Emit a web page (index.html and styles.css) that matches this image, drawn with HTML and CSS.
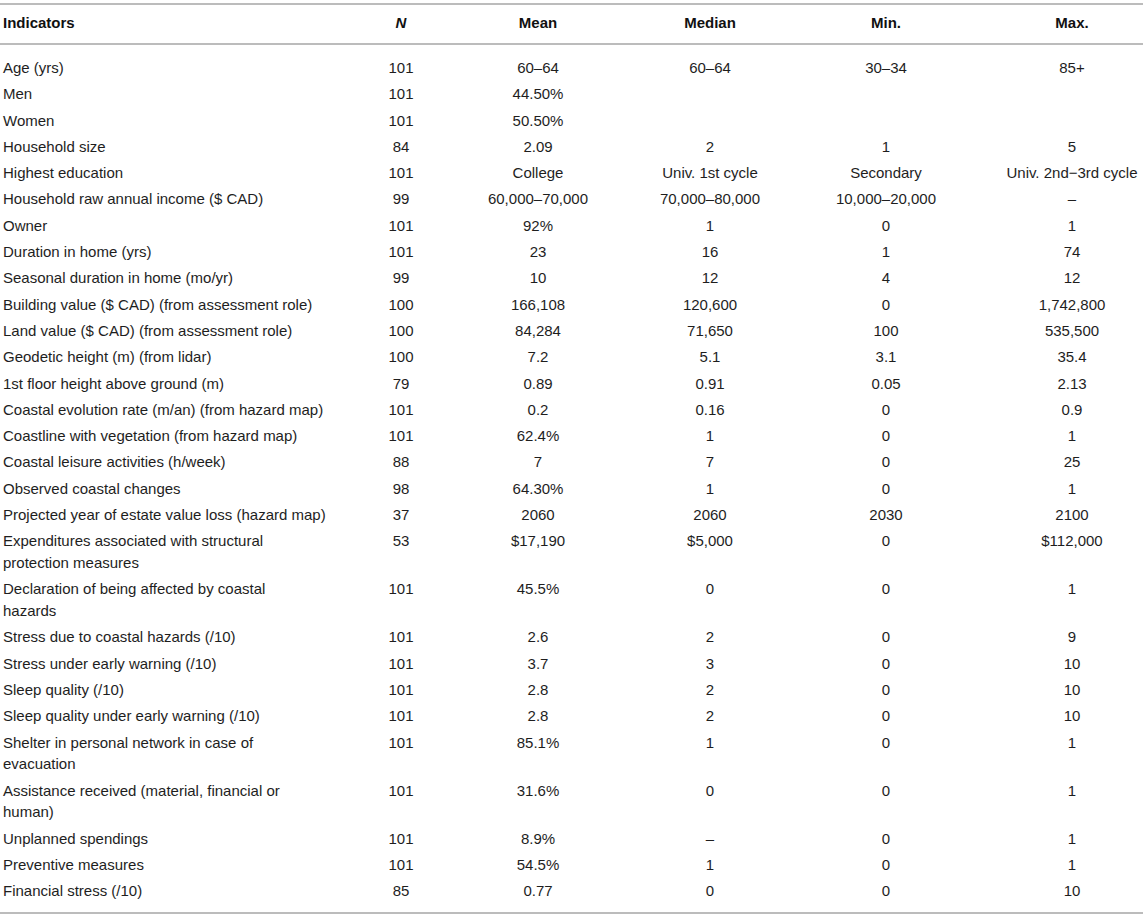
FILE: index.html
```html
<!DOCTYPE html>
<html lang="en">
<head>
<meta charset="utf-8">
<title>Indicators</title>
<link rel="stylesheet" href="styles.css">
</head>
<body>
<table class="data">
  <colgroup>
    <col class="c-ind"><col class="c-n"><col class="c-mean"><col class="c-med"><col class="c-min"><col class="c-max">
  </colgroup>
  <thead>
    <tr><th class="lbl">Indicators</th><th><i>N</i></th><th>Mean</th><th>Median</th><th>Min.</th><th>Max.</th></tr>
  </thead>
  <tbody>
    <tr><td class="lbl">Age (yrs)</td><td>101</td><td>60–64</td><td>60–64</td><td>30–34</td><td>85+</td></tr>
    <tr><td class="lbl">Men</td><td>101</td><td>44.50%</td><td></td><td></td><td></td></tr>
    <tr><td class="lbl">Women</td><td>101</td><td>50.50%</td><td></td><td></td><td></td></tr>
    <tr><td class="lbl">Household size</td><td>84</td><td>2.09</td><td>2</td><td>1</td><td>5</td></tr>
    <tr><td class="lbl">Highest education</td><td>101</td><td>College</td><td>Univ. 1st cycle</td><td>Secondary</td><td>Univ. 2nd−3rd cycle</td></tr>
    <tr><td class="lbl">Household raw annual income ($ CAD)</td><td>99</td><td>60,000–70,000</td><td>70,000–80,000</td><td>10,000–20,000</td><td>–</td></tr>
    <tr><td class="lbl">Owner</td><td>101</td><td>92%</td><td>1</td><td>0</td><td>1</td></tr>
    <tr><td class="lbl">Duration in home (yrs)</td><td>101</td><td>23</td><td>16</td><td>1</td><td>74</td></tr>
    <tr><td class="lbl">Seasonal duration in home (mo/yr)</td><td>99</td><td>10</td><td>12</td><td>4</td><td>12</td></tr>
    <tr><td class="lbl">Building value ($ CAD) (from assessment role)</td><td>100</td><td>166,108</td><td>120,600</td><td>0</td><td>1,742,800</td></tr>
    <tr><td class="lbl">Land value ($ CAD) (from assessment role)</td><td>100</td><td>84,284</td><td>71,650</td><td>100</td><td>535,500</td></tr>
    <tr><td class="lbl">Geodetic height (m) (from lidar)</td><td>100</td><td>7.2</td><td>5.1</td><td>3.1</td><td>35.4</td></tr>
    <tr><td class="lbl">1st floor height above ground (m)</td><td>79</td><td>0.89</td><td>0.91</td><td>0.05</td><td>2.13</td></tr>
    <tr><td class="lbl">Coastal evolution rate (m/an) (from hazard map)</td><td>101</td><td>0.2</td><td>0.16</td><td>0</td><td>0.9</td></tr>
    <tr><td class="lbl">Coastline with vegetation (from hazard map)</td><td>101</td><td>62.4%</td><td>1</td><td>0</td><td>1</td></tr>
    <tr><td class="lbl">Coastal leisure activities (h/week)</td><td>88</td><td>7</td><td>7</td><td>0</td><td>25</td></tr>
    <tr><td class="lbl">Observed coastal changes</td><td>98</td><td>64.30%</td><td>1</td><td>0</td><td>1</td></tr>
    <tr><td class="lbl">Projected year of estate value loss (hazard map)</td><td>37</td><td>2060</td><td>2060</td><td>2030</td><td>2100</td></tr>
    <tr><td class="lbl">Expenditures associated with structural<br>protection measures</td><td>53</td><td>$17,190</td><td>$5,000</td><td>0</td><td>$112,000</td></tr>
    <tr><td class="lbl">Declaration of being affected by coastal<br>hazards</td><td>101</td><td>45.5%</td><td>0</td><td>0</td><td>1</td></tr>
    <tr><td class="lbl">Stress due to coastal hazards (/10)</td><td>101</td><td>2.6</td><td>2</td><td>0</td><td>9</td></tr>
    <tr><td class="lbl">Stress under early warning (/10)</td><td>101</td><td>3.7</td><td>3</td><td>0</td><td>10</td></tr>
    <tr><td class="lbl">Sleep quality (/10)</td><td>101</td><td>2.8</td><td>2</td><td>0</td><td>10</td></tr>
    <tr><td class="lbl">Sleep quality under early warning (/10)</td><td>101</td><td>2.8</td><td>2</td><td>0</td><td>10</td></tr>
    <tr><td class="lbl">Shelter in personal network in case of<br>evacuation</td><td>101</td><td>85.1%</td><td>1</td><td>0</td><td>1</td></tr>
    <tr><td class="lbl">Assistance received (material, financial or<br>human)</td><td>101</td><td>31.6%</td><td>0</td><td>0</td><td>1</td></tr>
    <tr><td class="lbl">Unplanned spendings</td><td>101</td><td>8.9%</td><td>–</td><td>0</td><td>1</td></tr>
    <tr><td class="lbl">Preventive measures</td><td>101</td><td>54.5%</td><td>1</td><td>0</td><td>1</td></tr>
    <tr><td class="lbl">Financial stress (/10)</td><td>85</td><td>0.77</td><td>0</td><td>0</td><td>10</td></tr>
  </tbody>
</table>
</body>
</html>
```

FILE: styles.css
```css
html, body {
  margin: 0;
  padding: 0;
  background: #ffffff;
}

body {
  padding-top: 3px;
  font-family: "Liberation Sans", Arial, Helvetica, sans-serif;
  font-size: 15px;
  color: #1e1e1e;
}

.data {
  width: 1143px;
  table-layout: fixed;
  border-collapse: collapse;
  border-top: 2px solid #bcbcbc;
  border-bottom: 2px solid #bcbcbc;
}

.c-ind { width: 375px; }
.c-n { width: 52px; }
.c-mean { width: 222px; }
.c-med { width: 122px; }
.c-min { width: 230px; }
.c-max { width: 142px; }

.data th,
.data td {
  padding: 2.3px 0;
  line-height: 21.7px;
  text-align: center;
  vertical-align: top;
  white-space: nowrap;
  font-weight: normal;
}

.data thead th {
  font-weight: bold;
  color: #111111;
  padding-top: 7px;
  padding-bottom: 9px;
  border-bottom: 2px solid #bcbcbc;
}

.data .lbl {
  text-align: left;
  padding-left: 3px;
}

.data tbody tr:first-child td {
  padding-top: 12.3px;
}

.data tbody tr:last-child td {
  padding-bottom: 9.8px;
}
```
